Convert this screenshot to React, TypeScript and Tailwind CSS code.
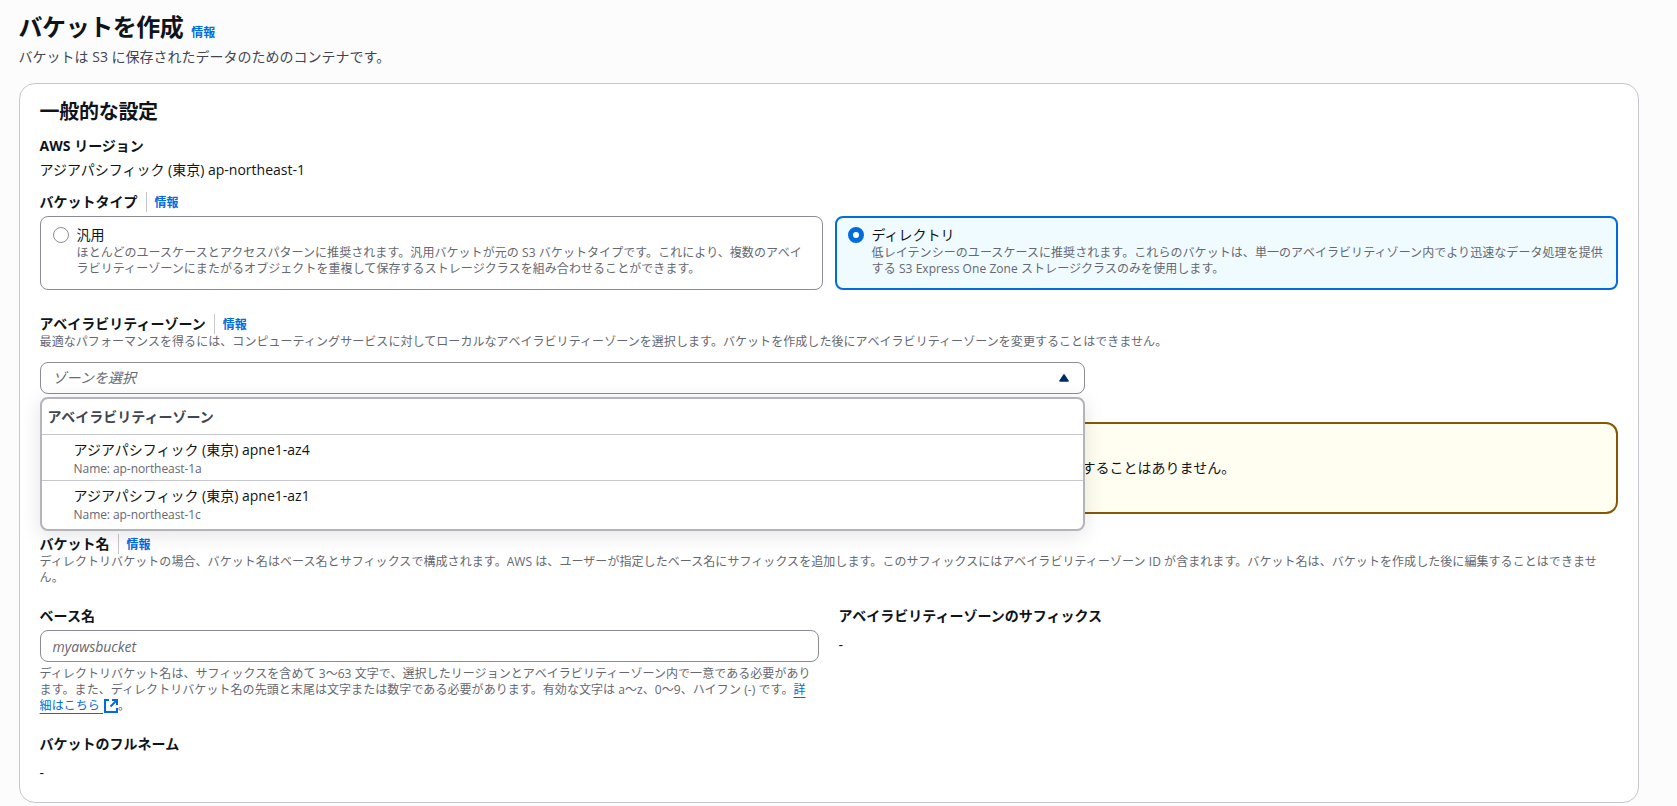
import { ReactNode } from "react";

const zones = [
  { label: "アジアパシフィック (東京) apne1-az4", name: "Name: ap-northeast-1a" },
  { label: "アジアパシフィック (東京) apne1-az1", name: "Name: ap-northeast-1c" }
];

function FieldLabel({ children, info = false }: { children: ReactNode; info?: boolean }) {
  return (
    <div className="flex h-5 items-center font-bold">
      <span>{children}</span>
      {info ? (
        <a
          href="#"
          className="ml-2 h-5 border-l border-[#c6c6cd] pl-2 text-xs leading-[22px] text-[#006ce0]"
        >
          情報
        </a>
      ) : null}
    </div>
  );
}

function Hint({ children }: { children: ReactNode }) {
  return <p className="text-xs leading-4 tracking-[0.005em] text-[#656871]">{children}</p>;
}

function Tile({
  title,
  selected = false,
  children
}: {
  title: string;
  selected?: boolean;
  children: ReactNode;
}) {
  return (
    <label
      className={
        selected
          ? "flex h-[74px] gap-2 rounded-lg border-2 border-[#006ce0] bg-[#f0fbff] pt-[7px] pl-[11px]"
          : "flex h-[74px] gap-2 rounded-lg border border-[#8c8c94] bg-white pt-2 pl-3"
      }
    >
      <span
        className={
          selected
            ? "mt-0.5 size-4 shrink-0 rounded-full border-[5px] border-[#006ce0] bg-white"
            : "mt-0.5 size-4 shrink-0 rounded-full border border-[#8c8c94] bg-white"
        }
      />
      <span className="min-w-0">
        <span className="block">{title}</span>
        <Hint>{children}</Hint>
      </span>
    </label>
  );
}

function ZoneSelect() {
  return (
    <div className="relative mt-3 w-[1045px]">
      <button
        type="button"
        className="flex h-8 w-full items-center justify-between rounded-lg border border-[#8c8c94] bg-white pr-[15px] pl-3"
      >
        <span className="text-[#656871] italic">ゾーンを選択</span>
        <svg width="10" height="8" viewBox="0 0 10 8">
          <path d="M5 1 9 7H1Z" fill="#002b66" stroke="#002b66" strokeWidth="1.6" strokeLinejoin="round" />
        </svg>
      </button>

      <div className="absolute top-[35px] left-0 z-10 h-[134px] w-full overflow-hidden rounded-lg border-2 border-[#b4b4bb] bg-white shadow-[0_4px_20px_1px_rgba(0,7,22,0.1)]">
        <div className="flex h-[35px] items-center pl-1.5 font-bold text-[#424650]">
          アベイラビリティーゾーン
        </div>
        {zones.map((zone) => (
          <div key={zone.name} className="h-[46px] border-t border-[#c6c6cd] pt-[5px] pl-8">
            <div>{zone.label}</div>
            <div className="pt-px text-xs leading-4 tracking-[-0.006em] text-[#656871]">{zone.name}</div>
          </div>
        ))}
      </div>
    </div>
  );
}

function ExternalIcon() {
  return (
    <svg className="ml-px inline-block align-[-3px]" width="14" height="14" viewBox="0 0 14 14" fill="none" stroke="#006ce0" strokeWidth="2">
      <path d="M5 1H1v12h12V9" />
      <path d="M8 1h5v5M13 1 6.5 7.5" />
    </svg>
  );
}

export default function App() {
  return (
    <main className="h-[806px] overflow-hidden bg-[#fcfcfd] pl-[18.6px] font-['Open_Sans','Noto_Sans_CJK_JP',sans-serif] text-sm leading-5 text-[#0f141a]">
      <header className="pt-3">
        <div className="flex h-[30px] items-baseline gap-2">
          <h1 className="text-2xl leading-[30px] font-bold tracking-[-0.02em]">バケットを作成</h1>
          <a href="#" className="translate-y-px text-xs font-bold text-[#006ce0]">
            情報
          </a>
        </div>
        <p className="mt-[5px] text-[#424650]">バケットは S3 に保存されたデータのためのコンテナです。</p>
      </header>

      <section className="mt-4 h-[720px] w-[1620px] rounded-2xl border border-[#c6c6cd] bg-white px-5 pt-4">
        <h2 className="text-xl leading-6 font-bold tracking-[-0.015em]">一般的な設定</h2>

        <div className="mt-3">
          <FieldLabel>AWS リージョン</FieldLabel>
          <p className="mt-1">アジアパシフィック (東京) ap-northeast-1</p>
        </div>

        <div className="mt-3">
          <FieldLabel info>バケットタイプ</FieldLabel>
          <div className="mt-1 grid grid-cols-2 gap-3">
            <Tile title="汎用">
              ほとんどのユースケースとアクセスパターンに推奨されます。汎用バケットが元の S3 バケットタイプです。これにより、複数のアベイ
              <br />
              ラビリティーゾーンにまたがるオブジェクトを重複して保存するストレージクラスを組み合わせることができます。
            </Tile>
            <Tile title="ディレクトリ" selected>
              低レイテンシーのユースケースに推奨されます。これらのバケットは、単一のアベイラビリティゾーン内でより迅速なデータ処理を提供
              <br />
              する S3 Express One Zone ストレージクラスのみを使用します。
            </Tile>
          </div>
        </div>

        <div className="mt-6">
          <FieldLabel info>アベイラビリティーゾーン</FieldLabel>
          <Hint>
            最適なパフォーマンスを得るには、コンピューティングサービスに対してローカルなアベイラビリティーゾーンを選択します。バケットを作成した後にアベイラビリティーゾーンを変更することはできません。
          </Hint>
          <ZoneSelect />
        </div>

        <div className="mt-7 flex h-[92px] items-center rounded-xl border-2 border-[#855900] bg-[#fffef0] pl-[1040px]">
          することはありません。
        </div>

        <div className="mt-5">
          <FieldLabel info>バケット名</FieldLabel>
          <Hint>
            ディレクトリバケットの場合、バケット名はベース名とサフィックスで構成されます。AWS は、ユーザーが指定したベース名にサフィックスを追加します。このサフィックスにはアベイラビリティーゾーン ID が含まれます。バケット名は、バケットを作成した後に編集することはできませ
            <br />
            ん。
          </Hint>
        </div>

        <div className="mt-5 grid grid-cols-2 gap-5">
          <div>
            <FieldLabel>ベース名</FieldLabel>
            <input
              type="text"
              placeholder="myawsbucket"
              className="mt-1 mb-1 block h-8 w-full rounded-lg border border-[#8c8c94] bg-white px-3 placeholder:text-[#656871] placeholder:italic"
            />
            <Hint>
              ディレクトリバケット名は、サフィックスを含めて 3～63 文字で、選択したリージョンとアベイラビリティーゾーン内で一意である必要があり
              <br />
              ます。また、ディレクトリバケット名の先頭と末尾は文字または数字である必要があります。有効な文字は a～z、0～9、ハイフン (-) です。
              <a href="#" className="text-[#006ce0] underline underline-offset-3">
                詳
                <br />
                細はこちら{" "}
              </a>
              <ExternalIcon />。
            </Hint>
          </div>
          <div>
            <FieldLabel>アベイラビリティーゾーンのサフィックス</FieldLabel>
            <p className="mt-[9px]">-</p>
          </div>
        </div>

        <div className="mt-5">
          <FieldLabel>バケットのフルネーム</FieldLabel>
          <p className="mt-[9px]">-</p>
        </div>
      </section>
    </main>
  );
}
